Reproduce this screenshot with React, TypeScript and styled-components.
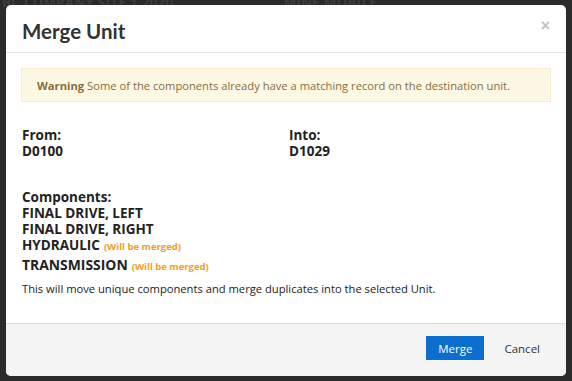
import React from "react";
import styled, { createGlobalStyle } from "styled-components";

const GlobalStyle = createGlobalStyle`
  html, body {
    margin: 0;
    padding: 0;
    background: #2b2b2b;
    width: 572px;
    height: 381px;
    overflow: hidden;
  }
`;

const Screen = styled.div`
  position: relative;
  width: 572px;
  height: 381px;
  background: #2b2b2b;
  padding: 5px 6px;
  box-sizing: border-box;
  font-family: "Open Sans", "Liberation Sans", sans-serif;
`;

const BackdropText = styled.div`
  position: absolute;
  top: -7px;
  left: 2px;
  display: flex;
  gap: 110px;
  color: #3d3d3d;
  font-size: 13px;
  font-weight: 700;
  letter-spacing: 0.5px;
`;

const Modal = styled.div`
  position: relative;
  height: 100%;
  background: #fff;
  border-radius: 5px;
  display: flex;
  flex-direction: column;
  overflow: hidden;
`;

const Header = styled.div`
  display: flex;
  align-items: center;
  justify-content: space-between;
  height: 47px;
  padding: 0 16px;
  border-bottom: 1px solid #e5e5e5;
`;

const Title = styled.h1`
  margin: 0;
  font-family: Lato, "Liberation Sans", sans-serif;
  font-size: 20.5px;
  font-weight: 700;
  color: #333;
  padding-top: 4px;
`;

const Close = styled.button`
  border: 0;
  background: none;
  padding: 0;
  color: #c4c4c4;
  font-size: 16px;
  font-weight: 700;
  line-height: 1;
  cursor: pointer;
  margin-top: -6px;
`;

const Body = styled.div`
  flex: 1;
  padding: 15px 15px 0;
  color: #333;
`;

const Alert = styled.div`
  background: #fcf8e3;
  border: 1px solid #faebcc;
  color: #8a6d3b;
  font-size: 11.2px;
  padding: 0 15px;
  height: 32px;
  display: flex;
  align-items: center;
  white-space: nowrap;
  strong {
    font-weight: 700;
    margin-right: 3px;
  }
`;

const Units = styled.div`
  display: grid;
  grid-template-columns: 267px 1fr;
  margin-top: 25px;
  padding-left: 1px;
`;

const Label = styled.div`
  font-size: 13.5px;
  font-weight: 700;
  line-height: 16px;
  color: #222;
`;

const Components = styled.div`
  margin-top: 30px;
  padding-left: 1px;
`;

const Item = styled.div<{ $tall?: boolean }>`
  font-size: ${(p) => (p.$tall ? "13.9px" : "13.5px")};
  font-weight: 700;
  line-height: ${(p) => (p.$tall ? "19px" : "16px")};
  color: #222;
  text-transform: uppercase;
`;

const Tag = styled.span`
  color: #f0a020;
  font-size: 9.5px;
  font-weight: 700;
  margin-left: 4px;
  text-transform: none;
`;

const Note = styled.p`
  margin: 5px 0 0 1px;
  font-size: 11.2px;
  color: #222;
  white-space: nowrap;
`;

const Footer = styled.div`
  height: 53px;
  background: #f4f4f4;
  border-top: 1px solid #dcdcdc;
  display: flex;
  align-items: center;
  justify-content: flex-end;
  gap: 8px;
  padding: 0 14px 4px 20px;
  box-sizing: border-box;
`;

const Button = styled.button<{ $primary?: boolean }>`
  font-family: "Open Sans", "Liberation Sans", sans-serif;
  font-size: 11.5px;
  height: 24px;
  padding: 0 12px;
  border: 0;
  border-radius: 0;
  cursor: pointer;
  background: ${(p) => (p.$primary ? "#0b6fd0" : "transparent")};
  color: ${(p) => (p.$primary ? "#fff" : "#333")};
`;

const components = [
  { name: "Final Drive, Left" },
  { name: "Final Drive, Right" },
  { name: "Hydraulic", merged: true },
  { name: "Transmission", merged: true },
];

export default function App() {
  return (
    <>
      <GlobalStyle />
      <Screen>
        <BackdropText>
          <span>BC COMPANY SITE 1 2020</span>
          <span>MINE MOBILE</span>
        </BackdropText>
        <Modal>
          <Header>
            <Title>Merge Unit</Title>
            <Close aria-label="Close">×</Close>
          </Header>
          <Body>
            <Alert>
              <strong>Warning</strong> Some of the components already have a
              matching record on the destination unit.
            </Alert>
            <Units>
              <div>
                <Label>From:</Label>
                <Label>D0100</Label>
              </div>
              <div>
                <Label>Into:</Label>
                <Label>D1029</Label>
              </div>
            </Units>
            <Components>
              <Label>Components:</Label>
              {components.map((c) => (
                <Item key={c.name} $tall={c.name === "Transmission"}>
                  {c.name}
                  {c.merged && <Tag>(Will be merged)</Tag>}
                </Item>
              ))}
            </Components>
            <Note>
              This will move unique components and merge duplicates into the
              selected Unit.
            </Note>
          </Body>
          <Footer>
            <Button $primary>Merge</Button>
            <Button>Cancel</Button>
          </Footer>
        </Modal>
      </Screen>
    </>
  );
}
